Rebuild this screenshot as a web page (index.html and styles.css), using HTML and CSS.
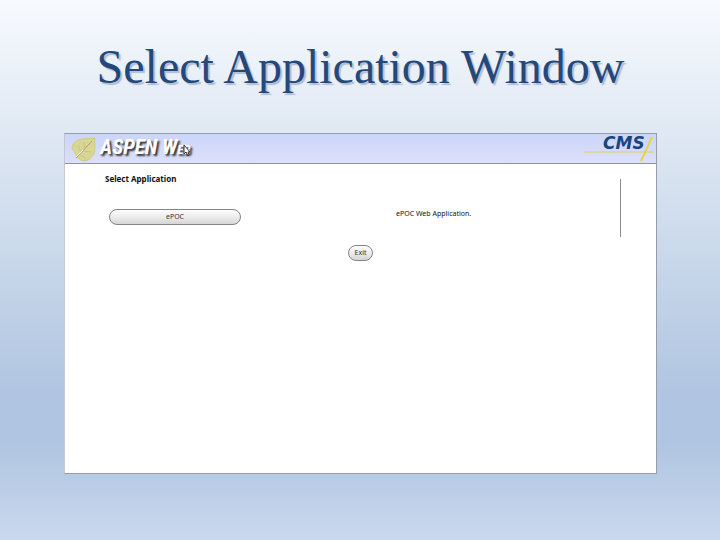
FILE: index.html
```
<!DOCTYPE html>
<html lang="en">
<head>
    <meta charset="UTF-8">
    <meta name="viewport" content="width=device-width, initial-scale=1.0">
    <title>Select Application Window</title>
    <link rel="stylesheet" href="styles.css">
</head>
<body>
    <h1 class="slide-title">Select Application Window</h1>
    <main class="window">
        <header class="banner">
            <div class="brand">
                <svg class="leaf" width="26" height="26" viewBox="0 0 26 26" aria-hidden="true">
                    <path d="M1 11C2 5 6 3 11 2L24 1C23 6 25 11 23 16C21 21 17 24 13 24C8 23 5 20 4 16C3 13 1 13 1 11Z" fill="#d9d593" stroke="#d0cc80"/>
                    <path d="M5 21L21 4" fill="none" stroke="#a8a070"/>
                    <path d="M10 16L7 8M14 12L13 5M12 14L20 15M9 18L15 21" fill="none" stroke="#c9c388"/>
                    <path d="M5 20L12 13" stroke="#f4f2df"/>
                </svg>
                <span class="brand-name">ASPEN W<small>EB</small></span>
                <svg class="cursor" width="8" height="13" viewBox="0 0 8 13" aria-hidden="true">
                    <path d="M1 1V10L3 8L5 12L6 11L5 8H7Z" fill="#fff" stroke="#333" stroke-width="1"/>
                </svg>
            </div>
            <svg class="cms" width="74" height="30" viewBox="0 0 74 30" role="img" aria-label="CMS">
                <path d="M2 18H72" stroke="#e0d24e"/>
                <path d="M70 3L59 27" stroke="#e5d34e" stroke-width="2"/>
                <text x="21" y="15">CMS</text>
            </svg>
        </header>
        <section class="apps">
            <h2>Select Application</h2>
            <div class="app-row">
                <div><button type="button" class="app-button">ePOC</button></div>
                <p>ePOC Web Application.</p>
            </div>
        </section>
        <div class="actions">
            <button type="button">Exit</button>
        </div>
    </main>
</body>
</html>
```

FILE: styles.css
```
* {
    box-sizing: border-box;
}
body {
    margin: 0;
    min-height: 100vh;
    padding: 35px 63px 66px 64px;
    display: flex;
    flex-direction: column;
    background: linear-gradient(#f7fafe 0%, #dfe8f3 25%, #b0c5e1 73%, #b0c5e1 82%, #c9d8ee 100%);
    font-family: "Noto Sans", sans-serif;
    font-size: 7px;
    line-height: 10px;
    color: #111;
}
.slide-title {
    margin: 0 0 34px;
    font-family: "Palatino Linotype", Palatino, "Liberation Serif", serif;
    font-size: 48px;
    font-weight: normal;
    line-height: 64px;
    text-align: center;
    white-space: nowrap;
    color: #24487a;
    text-shadow: 2px 2px 1px #aebdd2;
}
.window {
    flex: 1;
    background: #fff;
    border: 1px solid #989ca8;
    border-left-color: #c3c7d0;
}
.banner {
    display: flex;
    justify-content: space-between;
    height: 30px;
    padding-left: 6px;
    border-bottom: 1px solid #8f93a3;
    background: linear-gradient(#cbd6fc, #dcdff8);
}
.brand {
    position: relative;
    display: flex;
    align-items: flex-end;
    gap: 3px;
}
.brand-name {
    font-family: "Liberation Sans Narrow", "Roboto Condensed", "Open Sans Condensed", "DejaVu Sans Condensed", "Liberation Sans", sans-serif;
    font-size: 21px;
    font-weight: bold;
    font-style: italic;
    line-height: 26px;
    color: #fff;
    text-shadow: 2px 2px 2px #333;
}
.brand-name small {
    font-size: 13px;
}
.cursor {
    position: absolute;
    right: 0;
    top: 10px;
}
.cms text {
    font-family: "DejaVu Sans", sans-serif;
    font-size: 17px;
    font-weight: bold;
    font-style: italic;
    fill: #17467f;
}
.apps {
    display: flow-root;
    margin: 15px 35px 0;
    padding: 0 16px 0 5px;
    height: 58px;
    border-right: 1px solid #8a8a8a;
}
.apps h2 {
    margin: -5px 0 25px;
    font-size: 8px;
    line-height: 10px;
}
.app-row {
    display: grid;
    grid-template-columns: 58% 1fr;
    align-items: center;
    padding-left: 4px;
}
.app-row p {
    margin: 0 0 6px;
}
button {
    display: block;
    height: 16px;
    padding: 0 6px;
    border: 1px solid #858585;
    border-radius: 8px;
    background: linear-gradient(#fdfdfd 0%, #ececec 50%, #d5d5d5 100%);
    font: inherit;
    color: #333;
}
.app-button {
    width: 132px;
}
.actions {
    display: flex;
    justify-content: center;
    margin-top: 8px;
}
```
